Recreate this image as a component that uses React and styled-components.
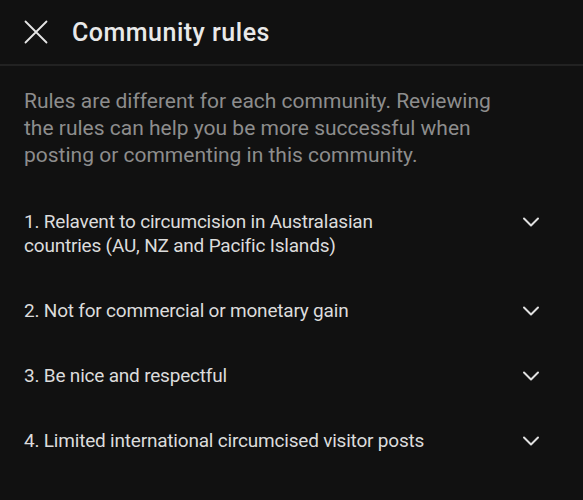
import styled, { createGlobalStyle } from "styled-components";

const rules = [
    "Relavent to circumcision in Australasian countries (AU, NZ and Pacific Islands)",
    "Not for commercial or monetary gain",
    "Be nice and respectful",
    "Limited international circumcised visitor posts",
];

const CloseIcon = () => (
    <svg width="24" height="24" viewBox="0 0 24 24" fill="none" stroke="currentColor" strokeWidth="1.8" strokeLinecap="round">
        <path d="M1.5 1.5 L22.5 22.5 M22.5 1.5 L1.5 22.5" />
    </svg>
);

const Chevron = () => (
    <svg width="18" height="10" viewBox="0 0 18 10" fill="none" stroke="currentColor" strokeWidth="2" strokeLinecap="round" strokeLinejoin="round">
        <path d="M2 1.5 L9 8.5 L16 1.5" />
    </svg>
);

const App = () => {
    return (
        <>
            <GlobalStyle />
            <Sheet>
                <Header>
                    <CloseButton><CloseIcon /></CloseButton>
                    <Title>Community rules</Title>
                </Header>
                <Intro>
                    Rules are different for each community. Reviewing the rules can help you be more successful when posting or commenting in this community.
                </Intro>
                <RuleList>
                    {rules.map((rule, i) => (
                        <Rule key={i}>
                            <RuleText>{i + 1}. {rule}</RuleText>
                            <Toggle><Chevron /></Toggle>
                        </Rule>
                    ))}
                </RuleList>
            </Sheet>
        </>
    )
}

const GlobalStyle = createGlobalStyle`
    html, body {
        margin: 0;
        background: #111111;
    }
    body {
        font-family: Roboto, "Liberation Sans", sans-serif;
    }
`;

const Sheet = styled.div`
    width: 583px;
    height: 500px;
    background: #111111;
    overflow: hidden;
`;

const Header = styled.div`
    display: flex;
    align-items: center;
    height: 64px;
    padding: 0 24px;
    border-bottom: 2px solid #222222;
`;

const CloseButton = styled.div`
    display: flex;
    color: #e6e6e6;
    margin-right: 24px;
`;

const Title = styled.h1`
    margin: 0;
    font-size: 25px;
    font-weight: 500;
    letter-spacing: 0.5px;
    color: #e9e9e9;
`;

const Intro = styled.p`
    margin: 0;
    padding: 22px 24px 0;
    max-width: 490px;
    font-size: 21px;
    line-height: 27px;
    color: #8d8d8d;
`;

const RuleList = styled.ul`
    list-style: none;
    margin: 0;
    padding: 21px 0 0;
`;

const Rule = styled.li`
    display: flex;
    align-items: flex-start;
    padding: 20px 43px 21px 24px;
`;

const RuleText = styled.div`
    flex: 1;
    font-size: 19px;
    letter-spacing: -0.2px;
    line-height: 24px;
    color: #dcdcdc;
    padding-right: 80px;
`;

const Toggle = styled.div`
    display: flex;
    align-items: center;
    height: 24px;
    color: #e0e0e0;
`;

export default App;
